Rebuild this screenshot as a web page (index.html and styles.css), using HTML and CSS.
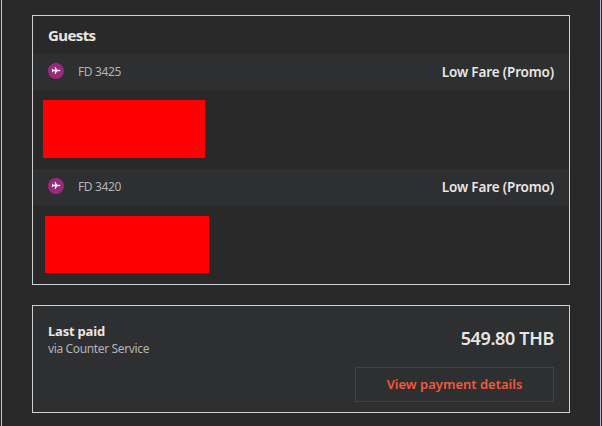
FILE: index.html
```html
<!DOCTYPE html>
<html lang="en">

<head>
    <meta charset="UTF-8">
    <meta name="viewport" content="width=device-width, initial-scale=1.0">
    <title>Booking details</title>
    <link rel="stylesheet" href="styles.css">
</head>

<body>
    <main class="page">
        <section class="card guests">
            <h2 class="title">Guests</h2>
            <div class="flight">
                <svg class="plane" viewBox="0 0 16 16">
                    <circle cx="8" cy="8" r="8" />
                    <path d="M12.4 7.5c0-.4-.5-.7-1.1-.7H9.1L7.5 4.1h-.9l.6 2.7H5.3l-.8-1h-.7l.4 1.7-.4 1.7h.7l.8-1h1.9l-.6 2.7h.9l1.6-2.7h2.2c.6 0 1.1-.3 1.1-.7z" />
                </svg>
                <span class="number">FD 3425</span>
                <span class="fare">Low Fare (Promo)</span>
            </div>
            <div class="names">
                <div class="redacted"></div>
            </div>
            <div class="flight">
                <svg class="plane" viewBox="0 0 16 16">
                    <circle cx="8" cy="8" r="8" />
                    <path d="M12.4 7.5c0-.4-.5-.7-1.1-.7H9.1L7.5 4.1h-.9l.6 2.7H5.3l-.8-1h-.7l.4 1.7-.4 1.7h.7l.8-1h1.9l-.6 2.7h.9l1.6-2.7h2.2c.6 0 1.1-.3 1.1-.7z" />
                </svg>
                <span class="number">FD 3420</span>
                <span class="fare">Low Fare (Promo)</span>
            </div>
            <div class="names second">
                <div class="redacted"></div>
            </div>
        </section>
        <section class="card payment">
            <div class="paid">
                <h3 class="label">Last paid</h3>
                <p class="method">via Counter Service</p>
            </div>
            <div class="total">
                <span class="amount">549.80 THB</span>
                <button class="details">View payment details</button>
            </div>
        </section>
    </main>
</body>

</html>
```
FILE: styles.css
```css
:root {
    --background: #292929;
    --row: #2e2f31;
    --text: #e8e6e3;
    --muted: #b2b4b8;
    --line: #d0d0d0;
    --accent: #f05a3c;
}

* {
    box-sizing: border-box;
    margin: 0;
}

body {
    background-color: var(--background);
    color: var(--text);
    font-family: "Noto Sans", "Open Sans", sans-serif;
    overflow: hidden;
}

.page {
    height: 426px;
    margin: 0 1px;
    padding: 15px 30px 0;
    border-left: 1px solid #c4c6ca;
    border-right: 1px solid #b4bac6;
    display: flex;
    flex-direction: column;
    gap: 20px;
}

.card {
    border: 1px solid var(--line);
}

.guests {
    height: 270px;
}

.title {
    height: 38px;
    padding-left: 15px;
    font-size: 15px;
    font-weight: 700;
    line-height: 39px;
    letter-spacing: -0.6px;
}

.flight {
    display: flex;
    align-items: center;
    height: 36px;
    padding: 0 15px;
    background-color: var(--row);
}

.plane {
    width: 16px;
    height: 16px;
    margin-bottom: 2px;
}

.plane circle {
    fill: #98297f;
}

.plane path {
    fill: #fff;
}

.number {
    margin: 0 0 2px 14px;
    color: var(--muted);
    font-size: 12px;
    letter-spacing: -0.36px;
}

.fare {
    margin-left: auto;
    font-size: 13.5px;
    font-weight: 600;
    letter-spacing: -0.15px;
}

.names {
    height: 79px;
    padding: 10px;
}

.redacted {
    width: 162px;
    height: 58px;
    background-color: #f00;
}

.names.second {
    padding: 11px 12px;
}

.second .redacted {
    width: 164px;
    height: 57px;
}

.payment {
    display: flex;
    justify-content: space-between;
    height: 108px;
    padding: 15px 15px 10px;
    background-color: var(--row);
}

.label {
    font-size: 13px;
    font-weight: 700;
    line-height: 20px;
    letter-spacing: -0.2px;
}

.method {
    color: var(--muted);
    font-size: 12px;
    line-height: 16px;
    letter-spacing: -0.36px;
}

.total {
    display: flex;
    flex-direction: column;
    align-items: flex-end;
}

.amount {
    height: 46px;
    font-size: 18px;
    font-weight: 600;
    line-height: 35px;
    letter-spacing: -0.35px;
}

.details {
    width: 199px;
    height: 35px;
    padding: 0 0 2px;
    border: 1px solid #cc0505;
    background: none;
    color: var(--accent);
    font-family: inherit;
    font-size: 13px;
    font-weight: 600;
}
```
